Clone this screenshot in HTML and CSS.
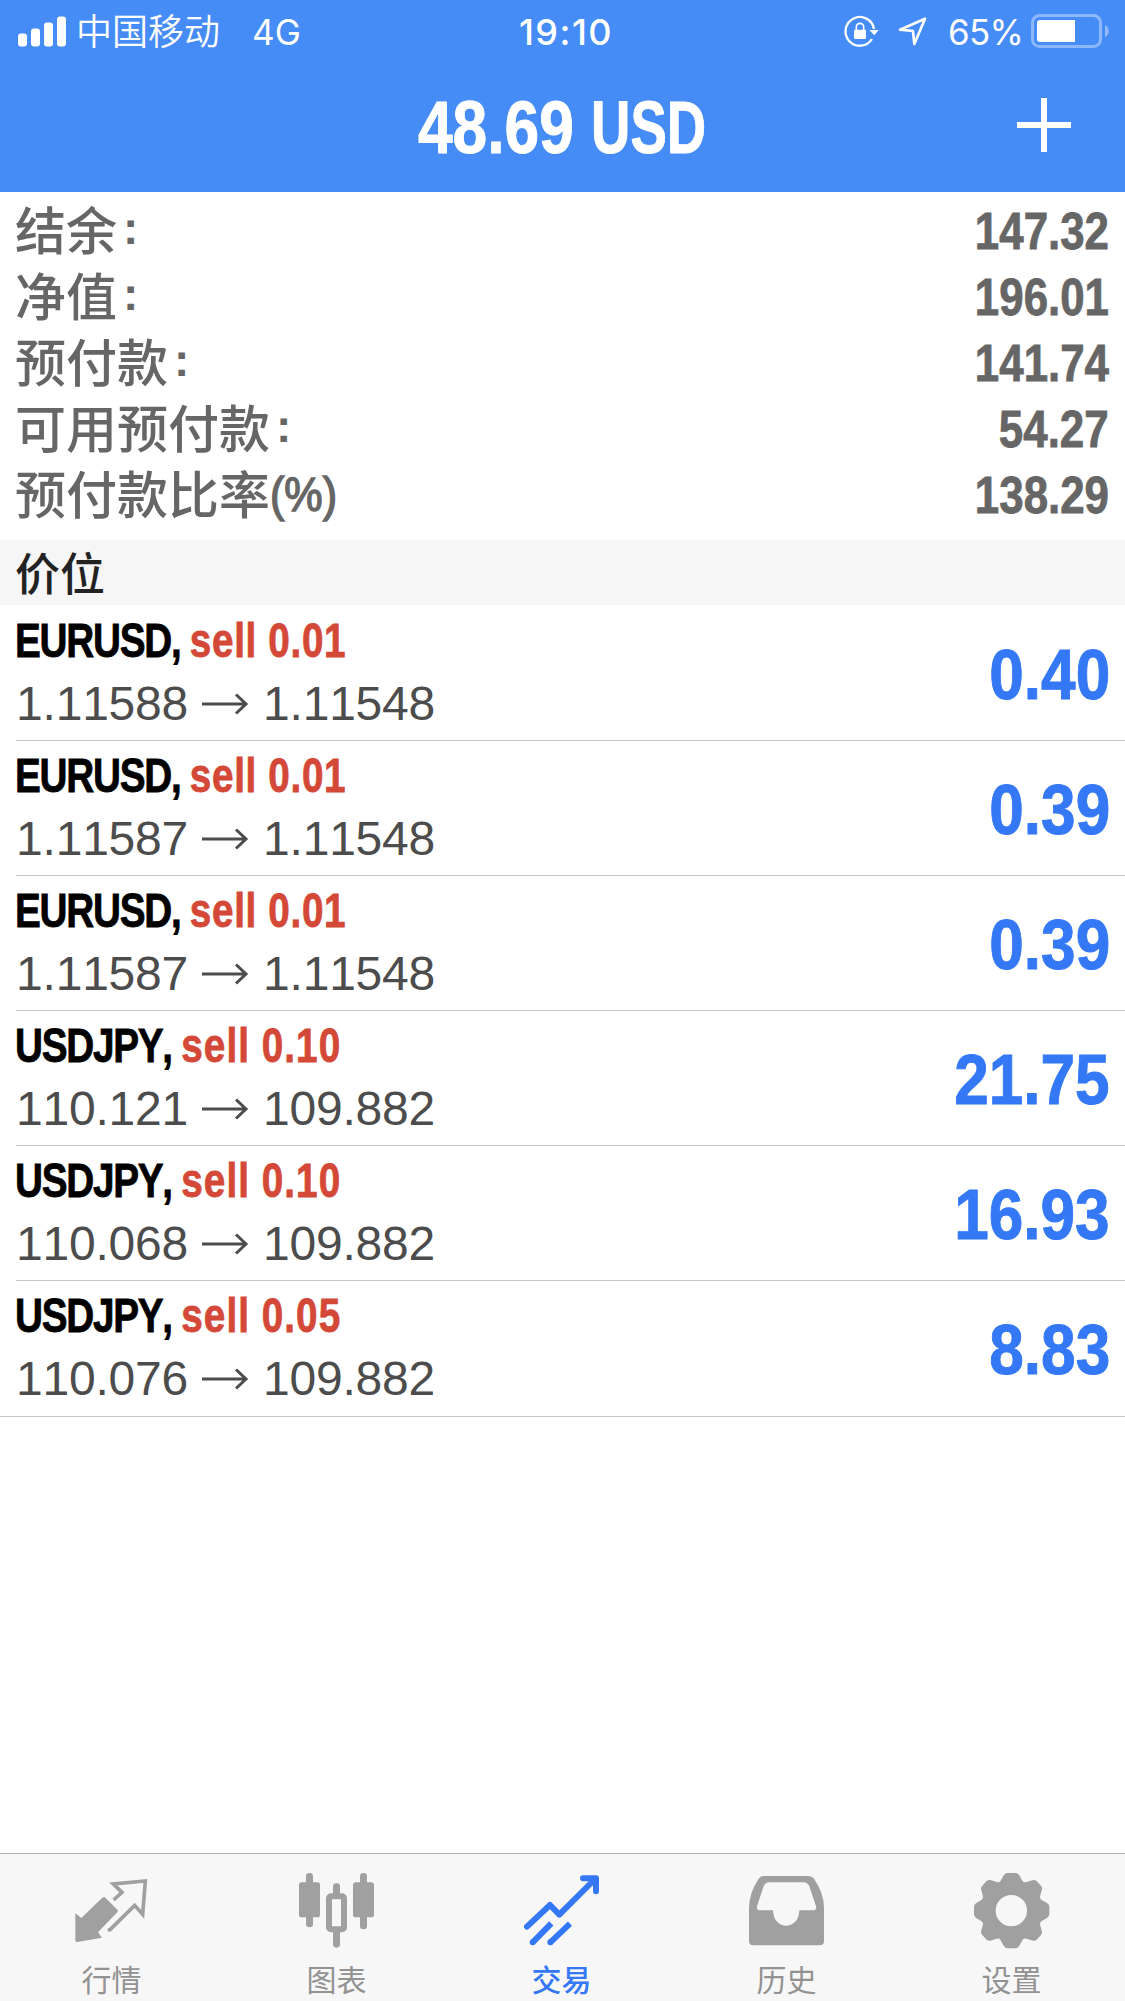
FILE: index.html
```html
<!DOCTYPE html>
<html lang="zh-CN">
<head>
<meta charset="utf-8">
<title>交易</title>
<link rel="stylesheet" href="styles.css">
</head>
<body>
<div class="app">
  <header class="header">
    <div class="status">
      <div class="status-left">
        <svg class="signal" viewBox="0 0 48 31"><rect x="0" y="17.500" width="9" height="13" rx="3"/><rect x="13" y="12.500" width="9" height="18" rx="3"/><rect x="26" y="6.500" width="9" height="24" rx="3"/><rect x="39" y="0.500" width="9" height="30" rx="3"/></svg>
        <span class="carrier">中国移动</span>
        <span class="network">4G</span>
      </div>
      <div class="time">19:10</div>
      <div class="status-right">
        <svg class="lock" viewBox="282 42 105 96"><path d="M366 114A43 43 0 1 1 372 84" fill="none" stroke="#fff" stroke-width="7"/><path d="M358 87H386L373 103Z" fill="#fff"/><rect x="312" y="86" width="36" height="28" rx="4" fill="#fff"/><path d="M319 88V78a11 11 0 0 1 22 0V88" fill="none" stroke="#fff" stroke-width="5"/></svg>
        <svg class="arrow-loc" viewBox="443 46 90 90"><path d="M524 54L449 87L488 91L492 130Z" fill="none" stroke="#fff" stroke-width="8" stroke-linejoin="round"/></svg>
        <span class="percent">65%</span>
        <svg class="battery" viewBox="0 0 79 34"><rect x="1.500" y="1.500" width="68" height="31" rx="7" fill="none" stroke="#fff" stroke-opacity=".38" stroke-width="3"/><path d="M9 6H44V28H9a3 3 0 0 1-3-3V9a3 3 0 0 1 3-3Z" fill="#fff"/><path d="M74 11c5 2 5 10 0 12Z" fill="#fff" fill-opacity=".4"/></svg>
      </div>
    </div>
    <div class="navbar">
      <h1 class="title"><span class="amount">48.69</span><span class="currency">USD</span></h1>
      <svg class="plus" viewBox="0 0 54 54"><path d="M27 0V54M0 27H54" stroke="#fff" stroke-width="6"/></svg>
    </div>
  </header>

  <section class="summary">
    <div class="line"><span>结余</span><i class="colon">:</i><b>147.32</b></div>
    <div class="line"><span>净值</span><i class="colon">:</i><b>196.01</b></div>
    <div class="line"><span>预付款</span><i class="colon">:</i><b>141.74</b></div>
    <div class="line"><span>可用预付款</span><i class="colon">:</i><b>54.27</b></div>
    <div class="line"><span>预付款比率</span><i class="pct">(%)</i><b>138.29</b></div>
  </section>

  <h2 class="section-title">价位</h2>

  <ul class="positions">
    <li class="position"><div class="info"><div class="deal"><span class="symbol">EURUSD, </span><span class="side">sell 0.01</span></div><div class="prices"><span class="open">1.11588</span><svg class="to" viewBox="0 0 46 22"><path d="M0 11H44M34 1.500L44 11L34 20.500"/></svg><span>1.11548</span></div></div><div class="profit">0.40</div></li>
    <li class="position"><div class="info"><div class="deal"><span class="symbol">EURUSD, </span><span class="side">sell 0.01</span></div><div class="prices"><span class="open">1.11587</span><svg class="to" viewBox="0 0 46 22"><path d="M0 11H44M34 1.500L44 11L34 20.500"/></svg><span>1.11548</span></div></div><div class="profit">0.39</div></li>
    <li class="position"><div class="info"><div class="deal"><span class="symbol">EURUSD, </span><span class="side">sell 0.01</span></div><div class="prices"><span class="open">1.11587</span><svg class="to" viewBox="0 0 46 22"><path d="M0 11H44M34 1.500L44 11L34 20.500"/></svg><span>1.11548</span></div></div><div class="profit">0.39</div></li>
    <li class="position"><div class="info"><div class="deal"><span class="symbol">USDJPY, </span><span class="side wide">sell 0.10</span></div><div class="prices"><span class="open">110.121</span><svg class="to" viewBox="0 0 46 22"><path d="M0 11H44M34 1.500L44 11L34 20.500"/></svg><span>109.882</span></div></div><div class="profit">21.75</div></li>
    <li class="position"><div class="info"><div class="deal"><span class="symbol">USDJPY, </span><span class="side wide">sell 0.10</span></div><div class="prices"><span class="open">110.068</span><svg class="to" viewBox="0 0 46 22"><path d="M0 11H44M34 1.500L44 11L34 20.500"/></svg><span>109.882</span></div></div><div class="profit">16.93</div></li>
    <li class="position"><div class="info"><div class="deal"><span class="symbol">USDJPY, </span><span class="side wide">sell 0.05</span></div><div class="prices"><span class="open">110.076</span><svg class="to" viewBox="0 0 46 22"><path d="M0 11H44M34 1.500L44 11L34 20.500"/></svg><span>109.882</span></div></div><div class="profit">8.83</div></li>
  </ul>

  <nav class="tabbar">
    <a class="tab"><svg class="tab-icon" viewBox="225 98 225 225"><path d="M307 172q5-4 9 0L352 208q4 4 0 8L294 276L306 292L232 305Q226 306 226 299V219L244 233Z" fill="currentColor"/><path d="M341 179L366 156L340 131L436 122L428 222L404 195L328 270" fill="none" stroke="currentColor" stroke-width="11"/><circle cx="327" cy="269" r="5" fill="currentColor"/></svg><span>行情</span></a>
    <a class="tab"><svg class="tab-icon" viewBox="900 98 225 225"><g fill="currentColor"><rect x="897" y="126" width="63" height="105" rx="8"/><rect x="918" y="98" width="21" height="163" rx="10"/><rect x="1059" y="126" width="63" height="105" rx="8"/><rect x="1080" y="98" width="21" height="169" rx="10"/><rect x="999" y="129" width="21" height="45" rx="10"/><rect x="999" y="262" width="21" height="60" rx="10"/></g><rect x="987" y="168" width="45" height="99" rx="6" fill="none" stroke="currentColor" stroke-width="18"/></svg><span>图表</span></a>
    <a class="tab active"><svg class="tab-icon" viewBox="375 98 225 225"><g fill="none" stroke="currentColor" stroke-width="18" stroke-linejoin="round"><path d="M381 259L450 194L478 223L585 116" stroke-linecap="round"/><path d="M549 114H588V153" stroke-linecap="round"/><path d="M560 112H590V142Z" stroke-width="8" fill="currentColor"/><path d="M454 249L398 306M510 250L451 306"/></g><circle cx="398" cy="306" r="9" fill="currentColor"/><circle cx="451" cy="306" r="9" fill="currentColor"/></svg><span>交易</span></a>
    <a class="tab"><svg class="tab-icon" viewBox="150 98 225 225"><path fill="currentColor" fill-rule="evenodd" d="M190 107H325Q336 107 342 115Q372 158 372 203V302Q372 315 359 315H160Q147 315 147 302V203Q147 158 176 115Q181 107 190 107ZM207 126Q196 127 191 138L171 198Q169 210 181 210H219C220 272 297 272 298 210H338Q351 210 348 198L328 138Q323 127 312 126Z"/></svg><span>历史</span></a>
    <a class="tab"><svg class="tab-icon" viewBox="825 98 225 225"><path fill="currentColor" fill-rule="evenodd" d="M921 98H948Q954 99 958 105L968 123Q972 127 979 125L1000 119Q1005 118 1010 122L1023 136Q1027 141 1026 146L1021 165Q1018 173 1024 178L1042 189Q1048 193 1048 200V222Q1048 229 1041 233L1024 243Q1018 248 1021 256L1026 274Q1027 279 1023 284L1010 298Q1005 302 1000 301L979 295Q972 293 968 298L958 316Q954 323 948 324H921Q915 323 911 316L901 298Q897 293 890 295L871 301Q865 302 860 298L847 284Q842 279 843 274L848 256Q851 248 845 243L828 233Q822 229 822 222V200Q822 193 828 189L845 178Q851 173 848 165L843 146Q842 141 847 136L860 122Q865 118 871 119L890 125Q897 127 901 123L911 105Q915 99 921 98ZM981 211A47 47 0 1 0 887 211A47 47 0 1 0 981 211Z"/></svg><span>设置</span></a>
  </nav>
</div>
</body>
</html>
```
FILE: styles.css
```css
* { box-sizing: border-box; margin: 0; padding: 0; }
body { background: #fff; font-family: "Liberation Sans", "Noto Sans CJK SC", sans-serif; font-kerning: none; }
svg { display: block; overflow: visible; flex: none; }
.app { width: 1125px; height: 2001px; display: flex; flex-direction: column; }

/* Header */
.header { height: 192px; flex: none; background: #468cf7; color: #fff; }
.status { height: 60px; display: grid; grid-template-columns: 1fr auto 1fr; align-items: center; padding: 0 15px 0 18px; font-family: "Inter", "Noto Sans CJK SC", sans-serif; font-size: 36px; line-height: 60px; }
.status-left, .status-right { display: flex; align-items: center; }
.status-right { justify-content: flex-end; }
.signal { width: 48px; height: 31px; fill: #fff; }
.carrier { margin-left: 10px; font-family: "Noto Sans CJK SC", sans-serif; font-weight: 350; height: 60px; line-height: 57px; }
.network { margin-left: 32px; font-weight: 400; font-size: 35px; padding-top: 2px; }
.time { font-weight: 500; font-size: 36px; letter-spacing: 1.500px; padding: 2px 0 0 4px; }
.lock { width: 35px; height: 32px; }
.arrow-loc { width: 30px; height: 30px; margin-left: 19px; }
.percent { margin-left: 20px; font-weight: 400; font-size: 35px; padding-top: 2px; letter-spacing: -.8px; }
.battery { width: 79px; height: 34px; margin-left: 8px; }
.navbar { height: 132px; display: grid; grid-template-columns: 1fr auto 1fr; align-items: center; padding: 0 54px; }
.title { grid-column: 2; display: flex; justify-content: space-between; width: 289px; font-size: 75px; line-height: 134px; -webkit-text-stroke: 1px #fff; }
.amount { width: 156px; transform: scaleX(.83); transform-origin: left; }
.currency { width: 116px; transform: scaleX(.727); transform-origin: left; }
.plus { width: 54px; height: 54px; justify-self: end; margin-top: -4px; }

/* Account summary */
.summary { height: 348px; flex: none; padding: 6px 16px 0 15px; color: #666; font-size: 51px; }
.line { height: 66px; display: flex; line-height: 68px; }
.line span { font-family: "Noto Sans CJK SC", sans-serif; font-weight: 500; line-height: 61px; }
.line i { font-style: normal; }
.colon { margin-left: 6px; font-weight: 700; font-size: 46px; line-height: 61px; }
.pct { -webkit-text-stroke: 1.500px #666; font-size: 49px; line-height: 64px; transform: scaleX(.88); transform-origin: left; }
.line b { margin-left: auto; transform: scaleX(.86); transform-origin: right; -webkit-text-stroke: .8px #666; }
.section-title { height: 65px; flex: none; padding-left: 15px; background: #f6f6f6; color: #222; font: 500 45px/64px "Noto Sans CJK SC", sans-serif; }

/* Open positions */
.positions { flex: 1; list-style: none; padding-top: 1px; }
.position { height: 135px; margin-left: 16px; padding-right: 16px; border-bottom: 1px solid #c4c4c4; display: flex; justify-content: space-between; }
.position:last-child { margin-left: 0; padding-left: 16px; height: 136px; }
.deal { height: 66px; margin-left: -1px; font-size: 49px; font-weight: 700; line-height: 68px; white-space: pre; transform: scaleX(.79); transform-origin: left; color: #000; width: 500px; -webkit-text-stroke: .8px; }
.symbol { letter-spacing: -1.600px; }
.side { color: #d44837; letter-spacing: .8px; }
.side.wide { letter-spacing: 1.300px; }
.prices { display: flex; align-items: center; height: 64px; font-size: 48px; line-height: 64px; letter-spacing: -.2px; color: #4c4c4c; }
.open { width: 186px; }
.to { width: 46px; height: 22px; margin-right: 15px; fill: none; stroke: #4c4c4c; stroke-width: 3; }
.profit { color: #3478f6; font-size: 71px; font-weight: 700; line-height: 138px; transform: scaleX(.875); transform-origin: right; -webkit-text-stroke: 1px #3478f6; margin-right: -1px; }

/* Tab bar */
.tabbar { height: 148px; flex: none; display: grid; grid-template-columns: repeat(5, 1fr); background: #f7f7f7; border-top: 1px solid #b2b2b2; }
.tab { display: flex; flex-direction: column; align-items: center; padding-top: 19px; color: #a0a0a0; }
.tab-icon { width: 75px; height: 75px; }
.tab span { font: 400 30px/40px "Noto Sans CJK SC", sans-serif; margin-top: 10px; margin-right: 2px; color: #929292; }
.tab.active, .tab.active span { color: #3478f6; }
.tab.active span { font-weight: 500; }
```
